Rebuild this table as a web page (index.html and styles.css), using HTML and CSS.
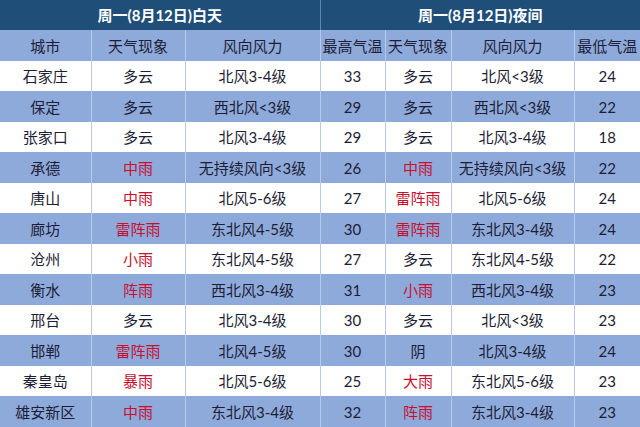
FILE: index.html
```html
<!DOCTYPE html>
<html lang="zh">
<head>
<meta charset="utf-8">
<title>天气预报</title>
<link rel="stylesheet" href="styles.css">
</head>
<body>
<table class="wx">
  <colgroup>
    <col class="c1"><col class="c2"><col class="c3"><col class="c4"><col class="c5"><col class="c6"><col class="c7">
  </colgroup>
  <thead>
    <tr class="title">
      <th colspan="3" class="day">周一(8月12日)白天</th>
      <th colspan="4">周一(8月12日)夜间</th>
    </tr>
    <tr class="head">
      <th>城市</th><th>天气现象</th><th>风向风力</th><th class="split">最高气温</th><th>天气现象</th><th>风向风力</th><th>最低气温</th>
    </tr>
  </thead>
  <tbody>
    <tr class="w"><td>石家庄</td><td>多云</td><td>北风3-4级</td><td class="split">33</td><td>多云</td><td>北风&lt;3级</td><td>24</td></tr>
    <tr class="b"><td>保定</td><td>多云</td><td>西北风&lt;3级</td><td class="split">29</td><td>多云</td><td>西北风&lt;3级</td><td>22</td></tr>
    <tr class="w"><td>张家口</td><td>多云</td><td>北风3-4级</td><td class="split">29</td><td>多云</td><td>北风3-4级</td><td>18</td></tr>
    <tr class="b"><td>承德</td><td class="red">中雨</td><td>无持续风向&lt;3级</td><td class="split">26</td><td class="red">中雨</td><td>无持续风向&lt;3级</td><td>22</td></tr>
    <tr class="w"><td>唐山</td><td class="red">中雨</td><td>北风5-6级</td><td class="split">27</td><td class="red">雷阵雨</td><td>北风5-6级</td><td>24</td></tr>
    <tr class="b"><td>廊坊</td><td class="red">雷阵雨</td><td>东北风4-5级</td><td class="split">30</td><td class="red">雷阵雨</td><td>东北风3-4级</td><td>24</td></tr>
    <tr class="w"><td>沧州</td><td class="red">小雨</td><td>东北风4-5级</td><td class="split">27</td><td>多云</td><td>东北风4-5级</td><td>22</td></tr>
    <tr class="b"><td>衡水</td><td class="red">阵雨</td><td>西北风3-4级</td><td class="split">31</td><td class="red">小雨</td><td>西北风3-4级</td><td>23</td></tr>
    <tr class="w"><td>邢台</td><td>多云</td><td>北风3-4级</td><td class="split">30</td><td>多云</td><td>北风&lt;3级</td><td>23</td></tr>
    <tr class="b"><td>邯郸</td><td class="red">雷阵雨</td><td>北风4-5级</td><td class="split">30</td><td>阴</td><td>北风3-4级</td><td>24</td></tr>
    <tr class="w"><td>秦皇岛</td><td class="red">暴雨</td><td>北风5-6级</td><td class="split">25</td><td class="red">大雨</td><td>东北风5-6级</td><td>23</td></tr>
    <tr class="b"><td>雄安新区</td><td class="red">中雨</td><td>东北风3-4级</td><td class="split">32</td><td class="red">阵雨</td><td>东北风3-4级</td><td>23</td></tr>
  </tbody>
</table>
</body>
</html>
```
FILE: styles.css
```css
html, body {
  margin: 0;
  padding: 0;
  background: #ffffff;
}
.wx {
  width: 640px;
  table-layout: fixed;
  border-collapse: collapse;
  font-family: Lato, "Noto Sans CJK SC", sans-serif;
  font-size: 15px;
  color: #1d1d35;
}
.c1 { width: 91px; }
.c2 { width: 94px; }
.c3 { width: 135px; }
.c4 { width: 65px; }
.c5 { width: 66px; }
.c6 { width: 123px; }
.c7 { width: 66px; }
.wx th, .wx td {
  padding: 0;
  text-align: center;
  vertical-align: middle;
  white-space: nowrap;
  overflow: hidden;
  line-height: 18px;
  border-left: 1px solid #b9cae6;
}
.wx tr > :first-child { border-left: none; }
.title th {
  background: #1f4e79;
  color: #ffffff;
  font-weight: 700;
  height: 30px;
  font-size: 15px;
  border-left: 1px solid #5b87b3;
}
.title th.day { border-left: none; }
.head th {
  background: #8eaadb;
  font-weight: 400;
  height: 31px;
  color: #1d1d35;
}
.w td { background: #ffffff; height: 30px; }
.b td { background: #8eaadb; height: 31px; }
.red { color: #c8102e; }
```
